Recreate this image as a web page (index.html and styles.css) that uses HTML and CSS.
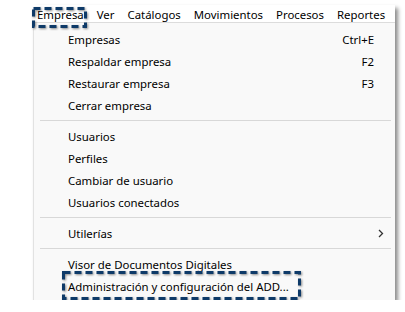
FILE: index.html
```html
<!DOCTYPE html>
<html lang="es">
  <head>
    <meta charset="UTF-8" />
    <meta name="viewport" content="width=device-width, initial-scale=1.0" />
    <title>Menú Empresa</title>
    <link rel="stylesheet" href="styles.css">
  </head>
  <body>
    <div class="window">
      <nav class="menubar">
        <div class="menu-title marked">
          Empresa
          <svg class="mark mark-small" width="55" height="21" viewBox="0 0 55 21">
            <rect x="1.5" y="1.5" width="52" height="18" />
          </svg>
        </div>
        <div class="menu-title">Ver</div>
        <div class="menu-title">Catálogos</div>
        <div class="menu-title">Movimientos</div>
        <div class="menu-title">Procesos</div>
        <div class="menu-title">Reportes</div>
      </nav>

      <ul class="dropdown">
        <li class="item"><span>Empresas</span><span class="key">Ctrl+E</span></li>
        <li class="item"><span>Respaldar empresa</span><span class="key">F2</span></li>
        <li class="item"><span>Restaurar empresa</span><span class="key">F3</span></li>
        <li class="item"><span>Cerrar empresa</span></li>
        <li class="sep"></li>
        <li class="item"><span>Usuarios</span></li>
        <li class="item"><span>Perfiles</span></li>
        <li class="item"><span>Cambiar de usuario</span></li>
        <li class="item"><span>Usuarios conectados</span></li>
        <li class="sep"></li>
        <li class="item">
          <span>Utilerías</span>
          <svg class="arrow" width="6" height="9" viewBox="0 0 6 9">
            <path d="M1 1 L4.5 4.5 L1 8" />
          </svg>
        </li>
        <li class="sep"></li>
        <li class="item"><span>Visor de Documentos Digitales</span></li>
        <li class="item marked">
          <span>Administración y configuración del ADD...</span>
          <svg class="mark mark-big" width="239" height="29" viewBox="0 0 239 29">
            <rect x="1.5" y="1.5" width="236" height="26" />
          </svg>
        </li>
      </ul>
    </div>
  </body>
</html>
```

FILE: styles.css
```css
* {
  padding: 0;
  margin: 0;
  box-sizing: border-box;
}

body {
  font-family: "Noto Sans", "Open Sans", sans-serif;
  font-size: 11.4px;
  color: #000;
  background: #fff;
}

.window {
  width: 362px;
  margin: 5px 0 0 33px;
  box-shadow: 3px 3px 4px rgba(0, 0, 0, 0.45);
}

.menubar {
  display: flex;
  height: 18px;
  padding-left: 4px;
  gap: 13px;
  background: #fff;
  border-bottom: 1px solid #dcdcdc;
  line-height: 20px;
}

.menu-title {
  white-space: nowrap;
}

.dropdown {
  list-style: none;
  background: #f9f9f9;
  border-left: 1px solid #e2e2e2;
  padding: 5px 0 3px;
}

.item {
  display: flex;
  align-items: center;
  justify-content: space-between;
  height: 22px;
  padding: 0 21px 0 34px;
}

.key {
  text-align: right;
}

.arrow {
  fill: none;
  stroke: #333;
  stroke-width: 1.3;
  margin-right: -10px;
}

.sep {
  height: 9px;
  margin: 0 4px 0 6px;
  background: linear-gradient(#d8d8d8, #d8d8d8) center / 100% 1px no-repeat;
}

/* recuadros punteados de señalamiento */
.marked {
  position: relative;
}

.mark {
  position: absolute;
  fill: none;
  stroke: #0e3a68;
  stroke-width: 3;
  stroke-dasharray: 7 4;
  filter: drop-shadow(1px 1px 1px rgba(0, 0, 0, 0.45));
}

.mark-small {
  left: -5px;
  top: 2px;
}

.mark-big {
  left: 28px;
  top: -4px;
}
```
